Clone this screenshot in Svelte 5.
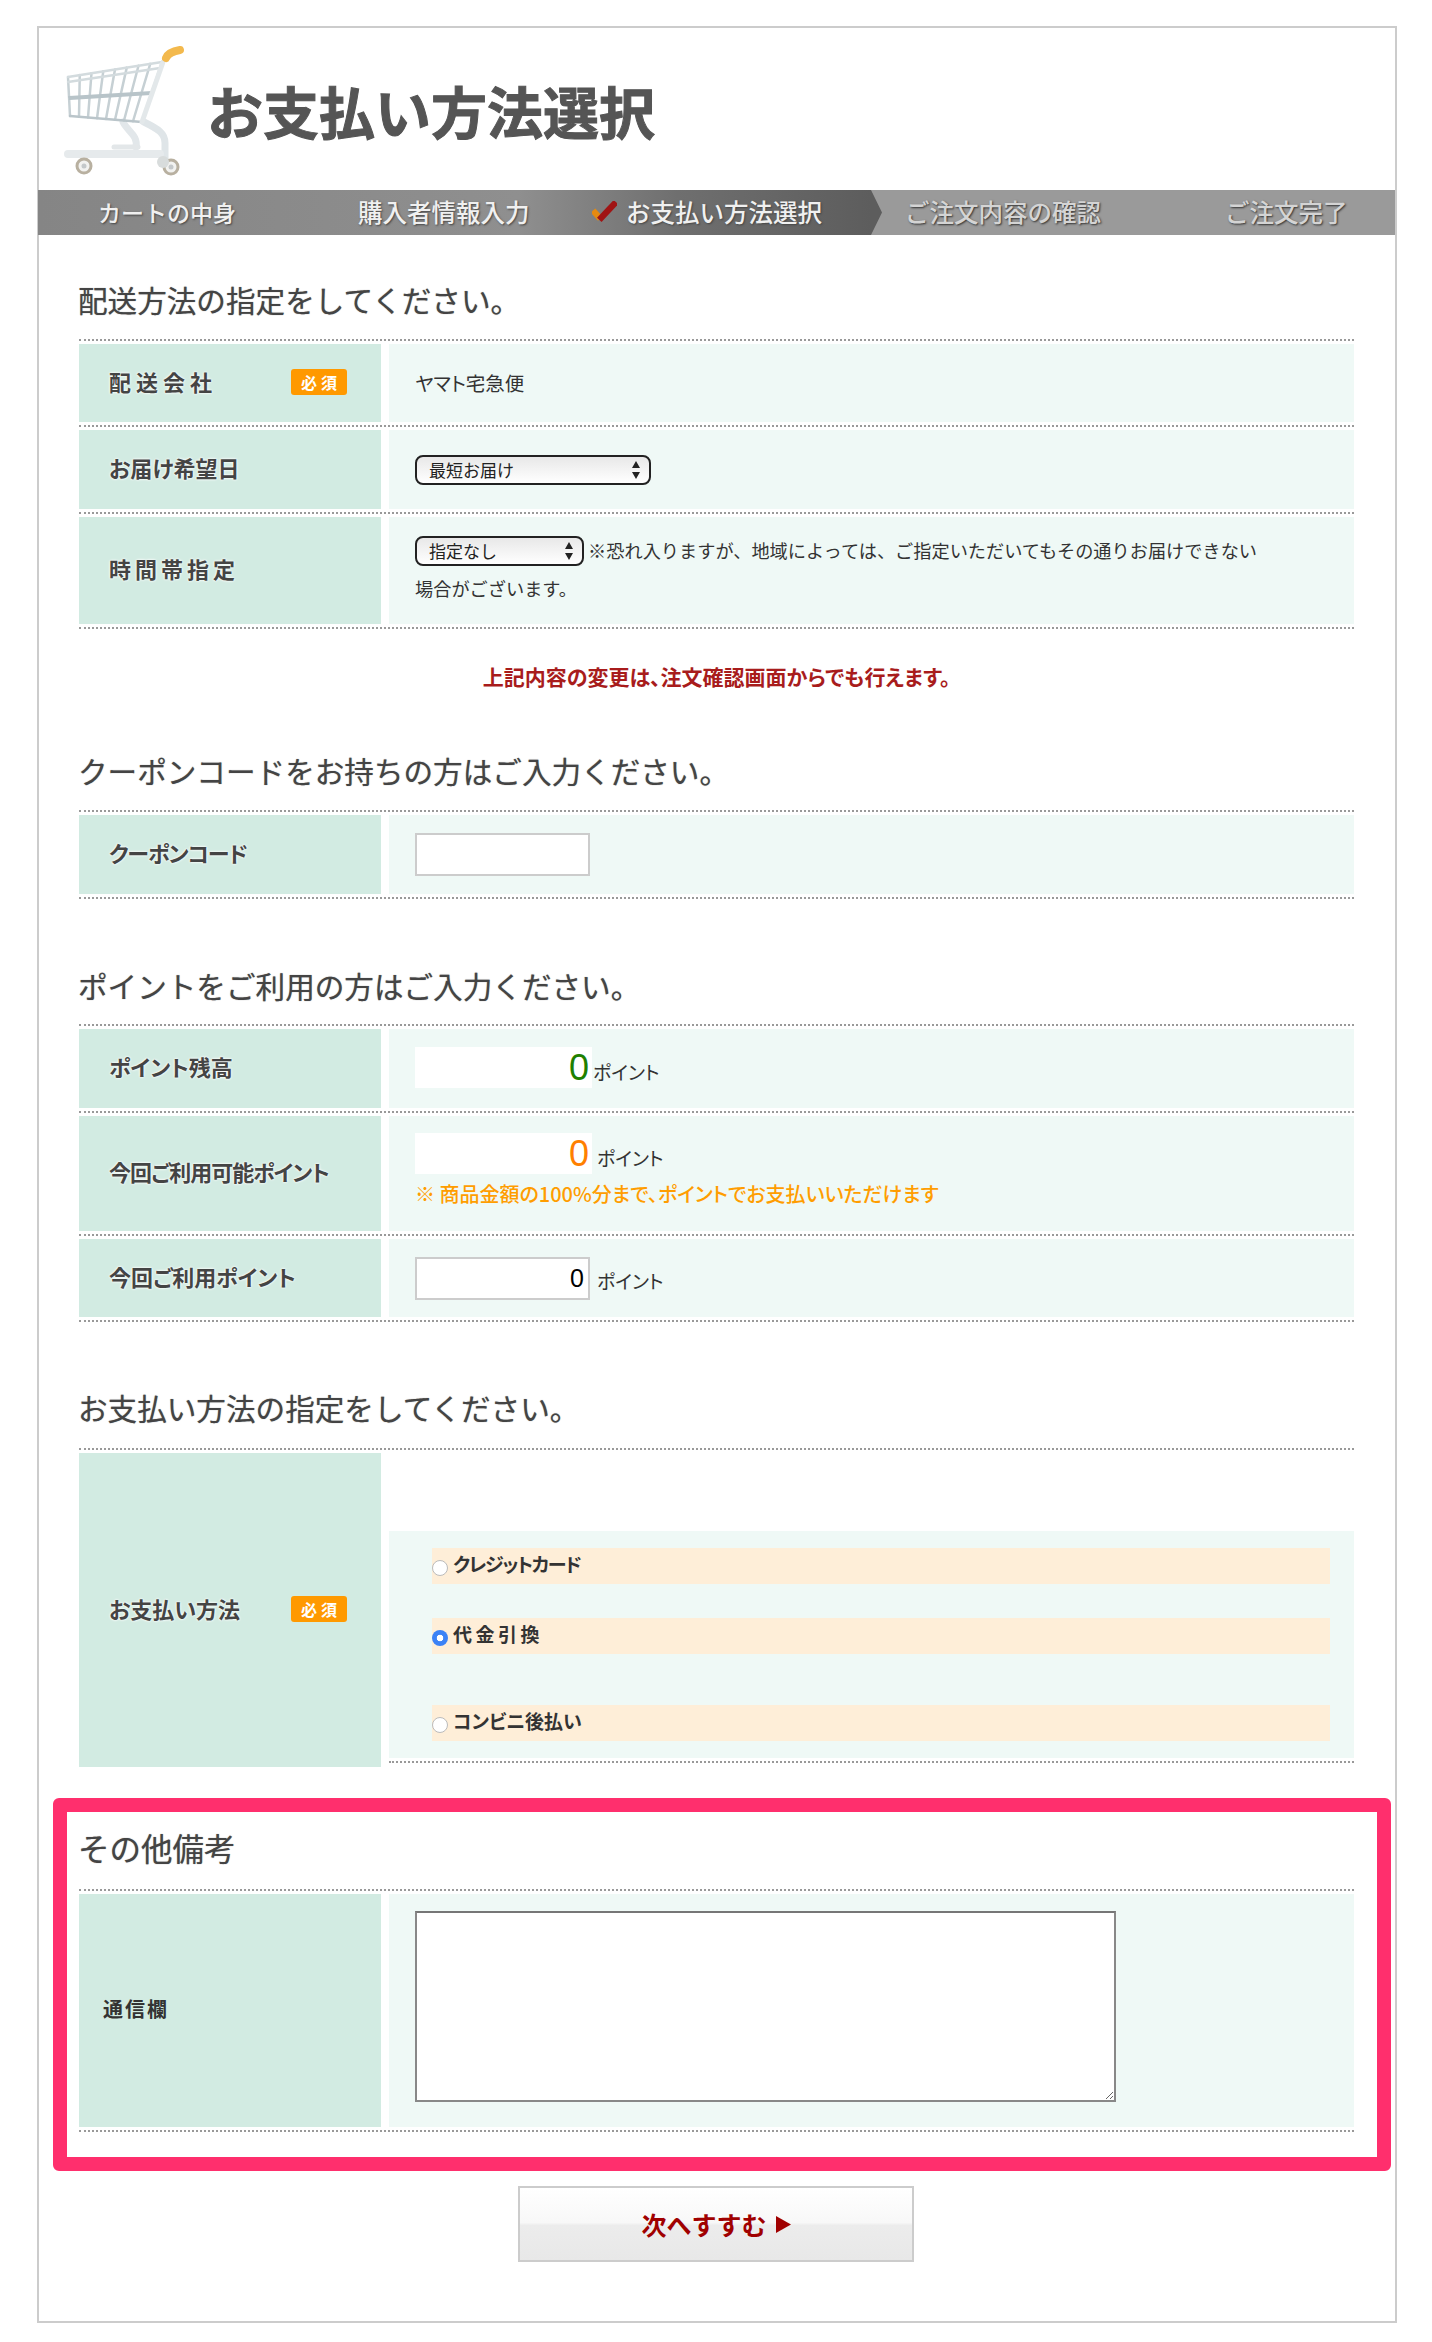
<script>
  const deliveryOptions = ['最短お届け'];
  const timeOptions = ['指定なし'];

  // cart basket wires, from the top rim to the bottom rim
  const posts = Array.from({ length: 9 }, (_, i) => {
    const t = i / 8;
    return {
      x1: 28 + 94 * t,
      y1: 48 - 15 * t,
      x2: 30 + 72 * t,
      y2: 87 + 6 * t
    };
  });
</script>

<div class="frame">
  <header class="header">
    <svg class="cart" viewBox="0 0 170 160" width="170" height="160" aria-hidden="true">
      <defs>
        <filter id="soft" x="-5%" y="-5%" width="110%" height="110%">
          <feGaussianBlur stdDeviation="0.5" />
        </filter>
      </defs>
      <g filter="url(#soft)">
        <g fill="none" stroke-linecap="round">
          <path d="M83 93 C88 103 98 106 96 118" stroke="#e2e7ea" stroke-width="7" />
          <path d="M104 93 C118 100 125 104 125 114 L125 130" stroke="#dfe5e8" stroke-width="7" />
          <path d="M28 125 L120 125" stroke="#e6eaec" stroke-width="8" />
          <path d="M74 118 L98 118" stroke="#e3e7e9" stroke-width="5" />
          {#each posts as p}
            <path d="M{p.x1} {p.y1} L{p.x2} {p.y2}" stroke="#c6d0d4" stroke-width="2.5" />
          {/each}
          <path d="M28 48 L122 33 M28 53 L120 39" stroke="#d3dbde" stroke-width="2.5" />
          <path d="M29 68 L112 63 M29.5 70 L111 65" stroke="#b8c4c9" stroke-width="1.8" />
          <path d="M30 87 L102 93" stroke="#bac5ca" stroke-width="2.5" />
          <path d="M123 33 L102 93" stroke="#e3e8ea" stroke-width="5" />
          <path d="M126 29 C128 24 134 22 140 21" stroke="#f3b94e" stroke-width="8" />
        </g>
        <circle cx="44" cy="137" r="7" fill="#f2f2f0" stroke="#b8b0a0" stroke-width="3" />
        <circle cx="44" cy="137" r="2.5" fill="#c4c8ca" />
        <circle cx="131" cy="138" r="7" fill="#f2f2f0" stroke="#b8b0a0" stroke-width="3" />
        <circle cx="131" cy="138" r="2.5" fill="#c4c8ca" />
        <circle cx="123" cy="133" r="6" fill="#d8dcdc" />
      </g>
    </svg>
    <h1 class="title">お支払い方法選択</h1>
  </header>

  <nav class="steps">
    <div class="step first">カートの中身</div>
    <div class="step second">購入者情報入力</div>
    <div class="step active">
      <svg viewBox="0 0 24 20" width="25" height="21" aria-hidden="true">
        <path d="M1 9 L8 17" stroke="#e58a10" stroke-width="6" fill="none" />
        <path d="M7 18 L23 1" stroke="#a01414" stroke-width="6" fill="none" />
      </svg>
      <span>お支払い方法選択</span>
    </div>
    <div class="step todo notch">ご注文内容の確認</div>
    <div class="step todo last">ご注文完了</div>
  </nav>

  <main class="content">
    <section class="section one">
      <h2>配送方法の指定をしてください。</h2>
      <div class="table">
        <div class="row h78">
          <div class="label wide">配送会社<span class="badge">必須</span></div>
          <div class="value lifted">ヤマト宅急便</div>
        </div>
        <div class="row h79">
          <div class="label">お届け希望日</div>
          <div class="value">
            <span class="select big">
              <select>
                {#each deliveryOptions as o}<option>{o}</option>{/each}
              </select>
              <svg viewBox="0 0 8 20" width="8" height="20" aria-hidden="true"><path d="M4 1 L8 8 L0 8 Z M4 19 L8 12 L0 12 Z" fill="#222" /></svg>
            </span>
          </div>
        </div>
        <div class="row h107">
          <div class="label wide2">時間帯指定</div>
          <div class="value text lifted">
            <div>
              <span class="select small">
                <select>
                  {#each timeOptions as o}<option>{o}</option>{/each}
                </select>
                <svg viewBox="0 0 8 20" width="8" height="20" aria-hidden="true"><path d="M4 1 L8 8 L0 8 Z M4 19 L8 12 L0 12 Z" fill="#222" /></svg>
              </span>
              ※恐れ入りますが、地域によっては、ご指定いただいてもその通りお届けできない<br />場合がございます。
            </div>
          </div>
        </div>
      </div>
      <p class="note">上記内容の変更は、注文確認画面からでも行えます。</p>
    </section>

    <section class="section two">
      <h2>クーポンコードをお持ちの方はご入力ください。</h2>
      <div class="table">
        <div class="row h79">
          <div class="label tight">クーポンコード</div>
          <div class="value"><input class="field" type="text" /></div>
        </div>
      </div>
    </section>

    <section class="section three">
      <h2>ポイントをご利用の方はご入力ください。</h2>
      <div class="table">
        <div class="row h79">
          <div class="label">ポイント残高</div>
          <div class="value">
            <div class="points up">
              <span class="box green">0</span><span class="unit near">ポイント</span>
            </div>
          </div>
        </div>
        <div class="row h115">
          <div class="label tight">今回ご利用可能ポイント</div>
          <div class="value stack">
            <div class="points">
              <span class="box orange">0</span><span class="unit">ポイント</span>
            </div>
            <p class="hint">※ 商品金額の100%分まで、ポイントでお支払いいただけます</p>
          </div>
        </div>
        <div class="row h78">
          <div class="label">今回ご利用ポイント</div>
          <div class="value">
            <input class="field right" type="text" value="0" /><span class="unit">ポイント</span>
          </div>
        </div>
      </div>
    </section>

    <section class="section four">
      <h2>お支払い方法の指定をしてください。</h2>
      <div class="table">
        <div class="row pay">
          <div class="label">お支払い方法<span class="badge">必須</span></div>
          <div class="pay-side">
            <div class="value options">
              <label class="option"><input type="radio" name="pay" /><span class="narrow">クレジットカード</span></label>
              <label class="option second-opt"><input type="radio" name="pay" checked /><span class="spaced">代金引換</span></label>
              <label class="option third-opt"><input type="radio" name="pay" /><span>コンビニ後払い</span></label>
            </div>
            <div class="pay-rule"></div>
          </div>
        </div>
      </div>
    </section>

    <section class="section five">
      <div class="highlight"></div>
      <h2>その他備考</h2>
      <div class="table">
        <div class="row h233">
          <div class="label plain">通信欄</div>
          <div class="value top"><textarea></textarea></div>
        </div>
      </div>
    </section>

    <div class="next-wrap">
      <button class="next" type="button">次へすすむ<svg viewBox="0 0 15 17" width="15" height="17" aria-hidden="true"><path d="M0 0 L15 8.5 L0 17 Z" fill="#a00000" /></svg></button>
    </div>
  </main>
</div>

<style>
  :global(body) {
    margin: 0;
    background: #fff;
  }

  .frame {
    box-sizing: border-box;
    width: 1360px;
    height: 2297px;
    margin: 26px 0 19px 37px;
    border: 2px solid #ccc;
    font-family: "Noto Sans CJK JP", "Noto Sans", sans-serif;
    color: #333;
    font-feature-settings: "palt";
  }

  .header {
    display: flex;
    align-items: center;
    height: 162px;
  }
  .cart {
    flex: none;
    margin-left: 1px;
  }
  .title {
    margin: 2px 0 0 -3px;
    font-size: 56px;
    line-height: 1.2;
    font-weight: 700;
    color: #555;
    -webkit-text-stroke: 1px #555;
    font-feature-settings: normal;
  }

  .steps {
    display: flex;
    height: 45px;
    margin-left: -1px;
    background: linear-gradient(90deg, #858585 0, #8f8f8f 480px, #6f6f6f 640px, #5d5d5d 833px);
  }
  .step {
    display: flex;
    align-items: center;
    box-sizing: border-box;
    padding-bottom: 2px;
    font-size: 24.5px;
    font-weight: 500;
    color: #f0f0f0;
    text-shadow: 1px 1px 2px #444;
    white-space: nowrap;
    font-feature-settings: normal;
  }
  .step.first { width: 320px; padding-left: 60px; font-size: 23px; }
  .step.second { width: 234px; }
  .step.active { width: 279px; gap: 9px; }
  .step.todo {
    background: #9a9a9a;
    color: #d4d4d4;
    text-shadow: 1px 1px 2px #333;
  }
  .step.notch {
    width: 320px;
    padding-left: 34px;
    clip-path: polygon(0 0, 100% 0, 100% 100%, 0 100%, 11px 50%);
  }
  .step.last {
    flex: 1;
    padding-left: 34px;
  }

  .content {
    padding: 0 41px 0 40px;
  }

  .section h2 {
    height: 40px;
    margin: 0 0 19px -1px;
    font-size: 29.6px;
    line-height: 36px;
    font-weight: 400;
    color: #444;
    text-shadow: 0 0 1px #888;
    white-space: nowrap;
    font-feature-settings: normal;
  }
  .section.one h2 { line-height: 40px; }
  .section.one { padding-top: 45px; }
  .section.two { padding-top: 62px; }
  .section.two h2 { margin-bottom: 17px; }
  .section.three { padding-top: 69px; }
  .section.three h2 { margin-bottom: 16px; }
  .section.four { padding-top: 68px; }
  .section.four h2 { margin-bottom: 18px; }
  .section.five {
    position: relative;
    padding-top: 61px;
  }
  .section.five h2 { font-size: 31.5px; line-height: 38px; margin-bottom: 21px; }

  .highlight {
    position: absolute;
    top: 31px;
    bottom: -39px;
    left: -26px;
    right: -37px;
    border: 14px solid #ff2f6d;
    border-radius: 6px;
    pointer-events: none;
  }

  .table {
    border-top: 2px dotted #999;
  }
  .row {
    display: grid;
    grid-template-columns: 302px 965px;
    column-gap: 8px;
    box-sizing: border-box;
    padding: 3px 0;
    border-bottom: 2px dotted #999;
  }
  .h78 { height: 86px; }
  .h79 { height: 87px; }
  .h107 { height: 115px; }
  .h115 { height: 123px; }
  .h233 { height: 241px; }

  .label {
    display: flex;
    align-items: center;
    padding: 0 34px 5px 30px;
    background: #d2ebe2;
    font-size: 22px;
    font-weight: 700;
    color: #444;
    text-shadow: 0 0 3px #fff, 0 0 2px #fff;
  }
  .label.wide { letter-spacing: 5px; }
  .label.wide2 { letter-spacing: 4px; }
  .label.tight { letter-spacing: -1px; }
  .label.plain {
    padding-left: 24px;
    color: #333;
    letter-spacing: 2px;
    text-shadow: none;
    font-size: 20px;
  }
  .badge {
    display: flex;
    align-items: center;
    justify-content: center;
    width: 56px;
    height: 26px;
    margin: 3px 0 0 auto;
    border-radius: 3px;
    background: #ff9900;
    color: #fff;
    font-size: 16px;
    letter-spacing: 4px;
    text-indent: 4px;
    text-shadow: none;
  }

  .value {
    display: flex;
    align-items: center;
    padding-left: 26px;
    background: #eff9f6;
    font-size: 19.5px;
    color: #333;
  }
  .value.lifted { padding-bottom: 2px; }
  .value.top {
    align-items: flex-start;
    padding-top: 17px;
  }
  .value.text {
    line-height: 35px;
    font-size: 18.2px;
    font-feature-settings: normal;
  }

  .select {
    position: relative;
    display: inline-block;
    vertical-align: middle;
  }
  .select.small { margin-bottom: 5px; }
  .select select {
    display: block;
    box-sizing: border-box;
    height: 30px;
    padding: 0 0 0 12px;
    border: 2px solid #222;
    border-radius: 8px;
    appearance: none;
    background: linear-gradient(#e8e8e8, #fff);
    font-family: inherit;
    font-size: 17px;
    color: #222;
  }
  .select.big select { width: 236px; }
  .select.small select { width: 169px; }
  .select svg {
    position: absolute;
    top: 5px;
    right: 11px;
  }

  .field {
    box-sizing: border-box;
    width: 175px;
    height: 43px;
    padding: 0 4px;
    border: 2px solid #ccc;
    border-radius: 0;
    background: #fff;
    font-family: "Liberation Sans", sans-serif;
    font-size: 25px;
    color: #000;
  }
  .field.right { text-align: right; }

  .points {
    display: flex;
    align-items: center;
  }
  .points.up { margin-top: -3px; }
  .box {
    box-sizing: border-box;
    width: 177px;
    height: 41px;
    padding-right: 3px;
    background: #fff;
    text-align: right;
    font-family: "Liberation Sans", sans-serif;
    font-size: 36px;
    line-height: 41px;
  }
  .box.green { color: #1f8000; }
  .box.orange { color: #ff8000; }
  .unit {
    margin: 8px 0 0 5px;
    font-size: 19px;
    color: #333;
  }
  .unit.near { margin-left: 1px; }
  .value > .unit { margin-top: 4px; margin-left: 7px; }
  .value.stack {
    flex-direction: column;
    align-items: flex-start;
    justify-content: flex-start;
    padding-top: 17px;
  }
  .hint {
    margin: 5px 0 0;
    font-size: 20px;
    font-weight: 500;
    color: #ff9d00;
  }

  .note {
    margin: 32px 0 0;
    font-size: 21px;
    line-height: 30px;
    font-weight: 700;
    text-align: center;
    color: #a81c1c;
  }

  .row.pay {
    padding-bottom: 0;
    border-bottom: 0;
  }
  .row.pay .label { height: 314px; box-sizing: border-box; }
  .pay-side { padding-top: 78px; }
  .value.options {
    flex-direction: column;
    align-items: stretch;
    box-sizing: border-box;
    height: 227px;
    padding: 17px 24px 0 43px;
  }
  .pay-rule {
    margin-top: 3px;
    border-bottom: 2px dotted #999;
  }
  .option {
    display: flex;
    align-items: center;
    height: 36px;
    background: #feeed8;
    font-size: 19px;
    font-weight: 700;
    color: #333;
  }
  .option span { padding-bottom: 5px; }
  .option input {
    flex: none;
    width: 16px;
    height: 16px;
    margin: 3px 5px 0 0;
    appearance: none;
    border: 1px solid #bbb;
    border-radius: 50%;
    background: #fff;
    box-sizing: border-box;
  }
  .option input:checked {
    border: 0;
    background: radial-gradient(circle, #fff 0 3px, #3b82f6 3.6px);
  }
  .second-opt { margin-top: 34px; }
  .third-opt { margin-top: 51px; }
  .narrow { letter-spacing: -1.3px; }
  .spaced { letter-spacing: 3.5px; }

  textarea {
    display: block;
    box-sizing: border-box;
    width: 701px;
    height: 191px;
    border: 2px solid #888;
    border-top-color: #767676;
    background: #fff;
  }

  .next-wrap {
    display: flex;
    justify-content: center;
    padding-top: 54px;
    margin-left: -1px;
  }
  .next {
    display: flex;
    align-items: center;
    justify-content: center;
    gap: 9px;
    box-sizing: border-box;
    width: 396px;
    height: 76px;
    border: 2px solid #ccc;
    background: linear-gradient(#fff 0, #f8f8f8 48%, #ececec 52%, #e8e8e8 100%);
    font-family: inherit;
    font-size: 25px;
    font-weight: 700;
    color: #a00000;
    font-feature-settings: normal;
  }
</style>
